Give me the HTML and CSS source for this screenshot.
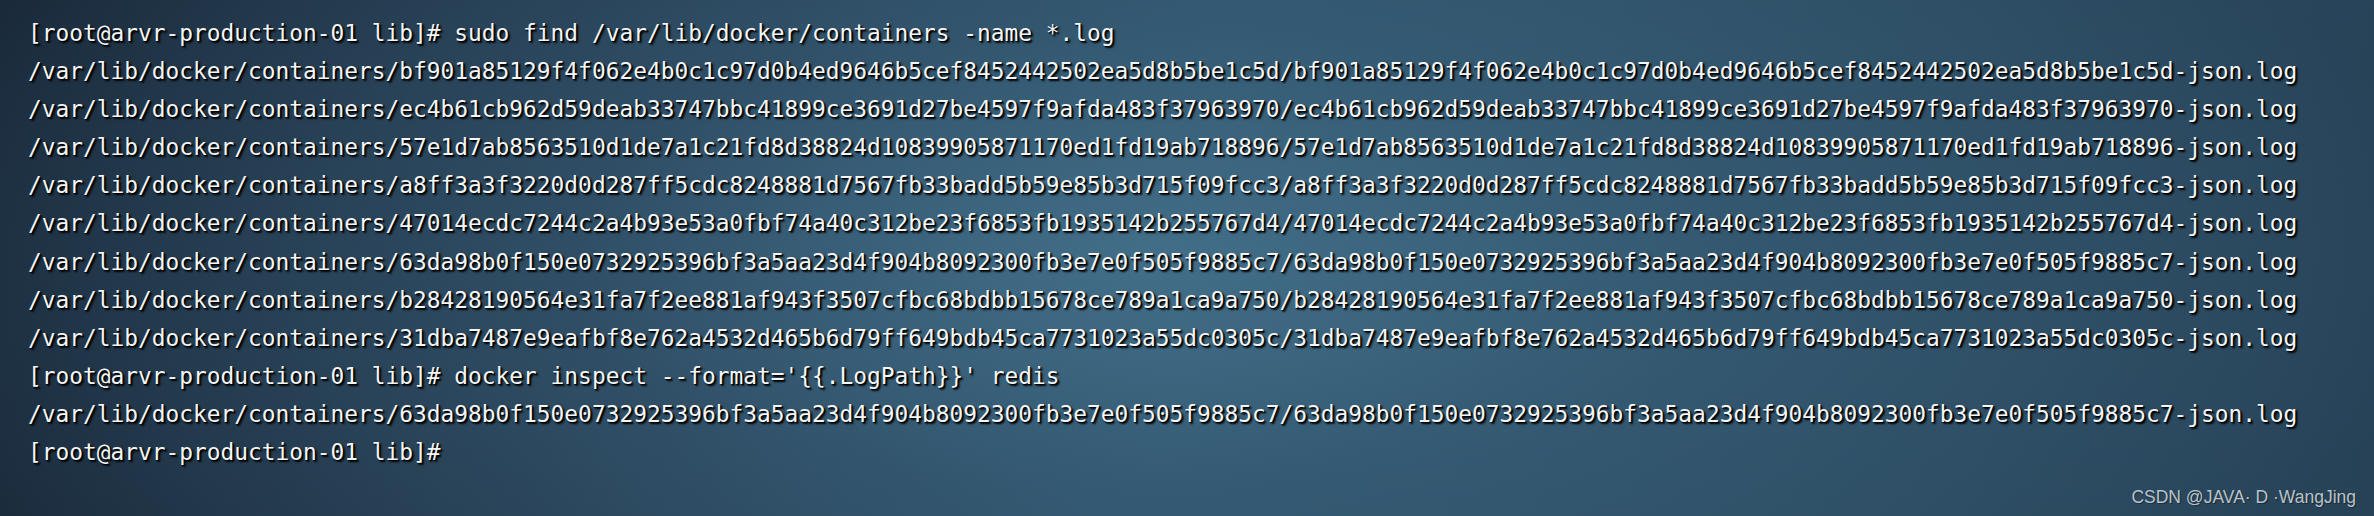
FILE: index.html
```html
<!DOCTYPE html>
<html lang="en">
<head>
    <meta charset="UTF-8">
    <title>terminal</title>
    <link rel="stylesheet" href="styles.css">
</head>
<body>
    <section class="screen">
        <pre class="term">[root@arvr-production-01 lib]# sudo find /var/lib/docker/containers -name *.log
/var/lib/docker/containers/bf901a85129f4f062e4b0c1c97d0b4ed9646b5cef8452442502ea5d8b5be1c5d/bf901a85129f4f062e4b0c1c97d0b4ed9646b5cef8452442502ea5d8b5be1c5d-json.log
/var/lib/docker/containers/ec4b61cb962d59deab33747bbc41899ce3691d27be4597f9afda483f37963970/ec4b61cb962d59deab33747bbc41899ce3691d27be4597f9afda483f37963970-json.log
/var/lib/docker/containers/57e1d7ab8563510d1de7a1c21fd8d38824d10839905871170ed1fd19ab718896/57e1d7ab8563510d1de7a1c21fd8d38824d10839905871170ed1fd19ab718896-json.log
/var/lib/docker/containers/a8ff3a3f3220d0d287ff5cdc8248881d7567fb33badd5b59e85b3d715f09fcc3/a8ff3a3f3220d0d287ff5cdc8248881d7567fb33badd5b59e85b3d715f09fcc3-json.log
/var/lib/docker/containers/47014ecdc7244c2a4b93e53a0fbf74a40c312be23f6853fb1935142b255767d4/47014ecdc7244c2a4b93e53a0fbf74a40c312be23f6853fb1935142b255767d4-json.log
/var/lib/docker/containers/63da98b0f150e0732925396bf3a5aa23d4f904b8092300fb3e7e0f505f9885c7/63da98b0f150e0732925396bf3a5aa23d4f904b8092300fb3e7e0f505f9885c7-json.log
/var/lib/docker/containers/b28428190564e31fa7f2ee881af943f3507cfbc68bdbb15678ce789a1ca9a750/b28428190564e31fa7f2ee881af943f3507cfbc68bdbb15678ce789a1ca9a750-json.log
/var/lib/docker/containers/31dba7487e9eafbf8e762a4532d465b6d79ff649bdb45ca7731023a55dc0305c/31dba7487e9eafbf8e762a4532d465b6d79ff649bdb45ca7731023a55dc0305c-json.log
[root@arvr-production-01 lib]# docker inspect --format='{{.LogPath}}' redis
/var/lib/docker/containers/63da98b0f150e0732925396bf3a5aa23d4f904b8092300fb3e7e0f505f9885c7/63da98b0f150e0732925396bf3a5aa23d4f904b8092300fb3e7e0f505f9885c7-json.log
[root@arvr-production-01 lib]#</pre>
        <span class="mark">CSDN @JAVA· D ·WangJing</span>
    </section>
</body>
</html>
```

FILE: styles.css
```css
* {
    margin: 0;
    padding: 0;
}

body {
    width: 2374px;
    height: 516px;
    overflow: hidden;
}

.screen {
    position: relative;
    width: 100%;
    height: 516px;
    background-color: #2b4a60;
    background-image:
        radial-gradient(ellipse 1300px 520px at 1150px 260px, rgba(70,115,142,0.85) 0%, rgba(58,98,124,0.5) 45%, rgba(40,70,92,0) 100%),
        linear-gradient(100deg, #1a2a3b 0%, #24394d 25%, #2f536b 50%, #2c4c62 75%, #274257 100%);
}

.term {
    padding: 14px 0 0 28px;
    font-family: "DejaVu Sans Mono", monospace;
    font-size: 22.85px;
    line-height: 38.1px;
    color: #f4f6f7;
    text-shadow: 2px 2px 2px #000, 1px 1px 1px #000;
}

.mark {
    position: absolute;
    right: 18px;
    bottom: 8px;
    font-family: "Liberation Sans", Arial, sans-serif;
    font-size: 17.5px;
    color: #b9c2c9;
    text-shadow: 1px 1px 1px rgba(0,0,0,0.4);
}
```
